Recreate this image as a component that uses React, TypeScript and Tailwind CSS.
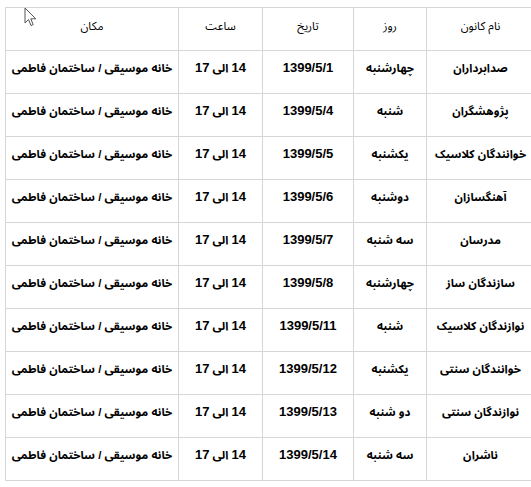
import React from 'react'

// schedule rows: name, day, date
const rows: [string, string, string][] = [
  ['صدابرداران', 'چهارشنبه', '1399/5/1'],
  ['پژوهشگران', 'شنبه', '1399/5/4'],
  ['خوانندگان کلاسیک', 'یکشنبه', '1399/5/5'],
  ['آهنگسازان', 'دوشنبه', '1399/5/6'],
  ['مدرسان', 'سه شنبه', '1399/5/7'],
  ['سازندگان ساز', 'چهارشنبه', '1399/5/8'],
  ['نوازندگان کلاسیک', 'شنبه', '1399/5/11'],
  ['خوانندگان سنتی', 'یکشنبه', '1399/5/12'],
  ['نوازندگان سنتی', 'دو شنبه', '1399/5/13'],
  ['ناشران', 'سه شنبه', '1399/5/14'],
]

const headers = ['نام کانون', 'روز', 'تاریخ', 'ساعت', 'مکان']

const Cursor = () => (
  <svg className="absolute left-[24px] top-[7px]" width="13" height="20" viewBox="0 0 13 20">
    <path
      d="M1 1 L1 16 L4.5 12.5 L7 18.5 L9.2 17.6 L6.8 11.8 L11.8 11.8 Z"
      fill="#fff"
      stroke="#555"
      strokeWidth="1"
      strokeLinejoin="round"
    />
  </svg>
)

const cell =
  'border border-[#d6d6d6] align-top pt-[7px] font-bold text-center leading-[20px] whitespace-nowrap'

export default function App() {
  return (
    <div className="relative w-[531px] h-[487px] overflow-hidden bg-white pl-[5px] pt-[7px]">
      <table
        dir="rtl"
        className="table-fixed border-collapse w-[529px] text-black text-[11.5px] [font-family:'Liberation_Sans','Noto_Sans_Arabic','Noto_Naskh_Arabic','DejaVu_Sans',sans-serif]"
      >
        <colgroup>
          <col className="w-[108px]" />
          <col className="w-[73px]" />
          <col className="w-[91px]" />
          <col className="w-[84px]" />
          <col className="w-[173px]" />
        </colgroup>
        <thead>
          <tr className="h-[43px]">
            {headers.map((h) => (
              <th
                key={h}
                className="border border-[#d6d6d6] align-top pt-[8px] font-normal text-center leading-[20px] whitespace-nowrap"
              >
                {h}
              </th>
            ))}
          </tr>
        </thead>
        <tbody>
          {rows.map(([name, day, date]) => (
            <tr key={date} className="h-[43px]">
              <td className={cell}>{name}</td>
              <td className={cell}>{day}</td>
              <td className={`${cell} text-[13px]`}>{date}</td>
              <td className={cell}>
                <span className="text-[13px]">14</span> الی <span className="text-[13px]">17</span>
              </td>
              <td className={cell}>خانه موسیقی / ساختمان فاطمی</td>
            </tr>
          ))}
        </tbody>
      </table>
      <Cursor />
    </div>
  )
}
